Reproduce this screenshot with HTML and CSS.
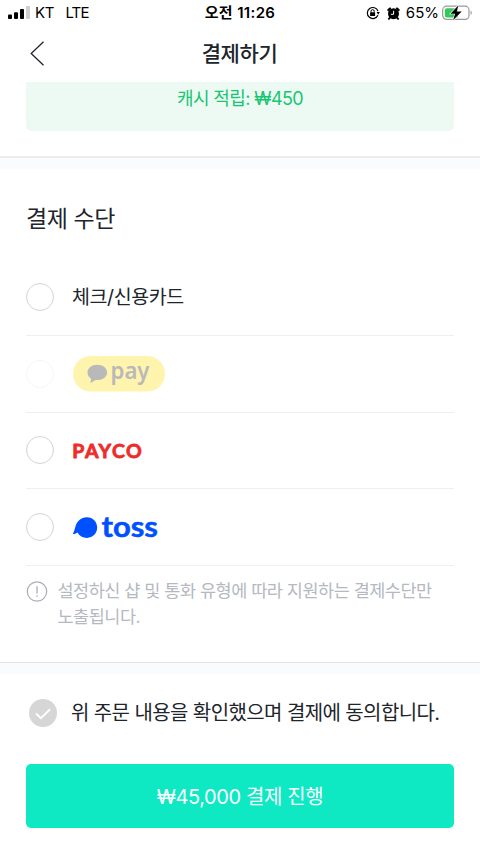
FILE: index.html
```
<!DOCTYPE html>
<html lang="ko">
<head>
<meta charset="utf-8">
<meta name="viewport" content="width=device-width, initial-scale=1">
<title>결제하기</title>
<link rel="stylesheet" href="styles.css">
</head>
<body>
<div class="status">
  <div class="status-left">
    <svg class="signal" width="22" height="14" viewBox="0 0 22 14"><rect x="0" y="8.5" width="4" height="4.5" rx="1"/><rect x="6" y="6.3" width="4" height="6.7" rx="1"/><rect x="12" y="3" width="4" height="10" rx="1"/><rect x="18" y="0" width="4" height="13" rx="1" fill="#cfcfcf"/></svg>
    <span class="carrier">KT</span><span class="network">LTE</span>
  </div>
  <time class="clock">오전 11:26</time>
  <div class="status-right">
    <svg class="lock" width="14" height="14" viewBox="0 0 14 14"><path d="M11.9 9.2A5.5 5.5 0 1 1 12 5.1" fill="none" stroke="#000" stroke-width="1.2"/><path d="M10.6 6h3.2l-1.6 2.7z"/><rect x="4.1" y="6.2" width="5" height="3.9" rx=".6"/><path d="M5 6.4V5.2a1.6 1.6 0 0 1 3.2 0v1.2" fill="none" stroke="#000" stroke-width="1"/></svg>
    <svg class="alarm" width="13" height="13" viewBox="0 0 13 13"><circle cx="6.5" cy="6.700" r="5.500"/><path d="M1.300 3 3 1.400M11.700 3 10 1.400M2.800 10.800l-.9 1M10.200 10.800l.9 1" stroke="#000" stroke-width="2" stroke-linecap="round"/><path d="M6.600 3.800v3.500H3.900" fill="none" stroke="#fff" stroke-width="1"/></svg>
    <span class="percent">65%</span>
    <svg class="battery" width="30" height="18" viewBox="0 0 30 18"><rect x=".7" y="2.200" width="26.300" height="13.200" rx="3.800" fill="#fff" stroke="#999" stroke-width="1.200"/><path d="M5 4.200h11v9.200H5a2.200 2.200 0 0 1-2.200-2.200V6.400a2.200 2.200 0 0 1 2.200-2.200z" fill="#34c759"/><path d="M28.600 6.800v4c1.600-.7 1.600-3.300 0-4z" fill="#999"/><path d="M16.500 1.200 8.500 9.700h4.600l-2 6.600L19.700 7.400h-5z" stroke="#fff" stroke-width="1.200" paint-order="stroke"/></svg>
  </div>
</div>
<header class="header">
  <svg class="back" width="15" height="26" viewBox="0 0 15 26"><path d="M13.500.800 1.200 12.500l12.300 11.700" fill="none" stroke="#20242b" stroke-width="1.300"/></svg>
  <h1 class="title">결제하기</h1>
</header>
<main>
  <section class="reward"><p class="reward-box">캐시 적립: ₩450</p></section>
  <section class="methods">
    <h2 class="heading">결제 수단</h2>
    <ul class="list">
      <li class="row"><i class="radio"></i><span class="label">체크/신용카드</span></li>
      <li class="row disabled"><i class="radio"></i>
        <svg class="kakao" width="94" height="46" viewBox="0 -5 94 46"><rect x="1" width="92" height="35.600" rx="17.800" fill="#fff4ad"/><path d="M25.300 8.800c-5.600 0-9.800 3.300-9.800 7.700 0 2.800 1.400 4.900 3.700 6.200l-.9 4.500 5.200-3.200 1.800.1c5.500 0 9.800-3.200 9.800-7.600s-4.300-7.700-9.800-7.700z" fill="#b9b9b9"/><text class="pay" x="38.500" y="23" textLength="39" lengthAdjust="spacingAndGlyphs">pay</text></svg></li>
      <li class="row"><i class="radio"></i>
        <svg class="payco" width="72" height="32" viewBox="0 0 72 32"><text class="payco-text" x=".3" y="23.500" textLength="69.500" lengthAdjust="spacing">PAYCO</text></svg></li>
      <li class="row"><i class="radio"></i>
        <svg class="toss" width="90" height="44" viewBox="0 0 90 44"><path d="M15 12.200c-6.500 0-10.400 4.600-11.700 9.900-.7 2.500-1.100 4.500-2.400 6.800 1.800.2 3.200-.5 4.600-1.500 1.800 3.400 5.200 5.500 9.500 5.500 5.800 0 10.200-4.500 10.200-10.300S20.800 12.200 15 12.200z" fill="#0050ff"/><text class="toss-text" x="29.500" y="31.800" textLength="56.500" lengthAdjust="spacingAndGlyphs">toss</text></svg></li>
    </ul>
    <div class="notice">
      <svg class="info" width="22" height="22" viewBox="0 0 22 22"><circle cx="11" cy="10.500" r="9.700" fill="none" stroke="#a9acb7" stroke-width="1.200"/><path d="M11 5.300v7.200M11 14.200v1.600" stroke="#a9acb7" stroke-width="1.300"/></svg>
      <p class="notice-text">설정하신 샵 및 통화 유형에 따라 지원하는 결제수단만<br>노출됩니다.</p>
    </div>
  </section>
  <section class="confirm">
    <div class="agree">
      <svg class="check" width="28" height="28" viewBox="0 0 28 28"><circle cx="14" cy="14" r="14" fill="#d6d6d6"/><path d="m7 14.600 4.900 4.600 9.200-8.900" fill="none" stroke="#fff" stroke-width="2"/></svg>
      <span class="agree-text">위 주문 내용을 확인했으며 결제에 동의합니다.</span>
    </div>
    <button class="submit">₩45,000 결제 진행</button>
  </section>
</main>
</body>
</html>
```

FILE: styles.css
```
* { box-sizing: border-box; }
body {
  margin: 0;
  height: 854px;
  overflow: hidden;
  background: #fff;
  color: #20242b;
  font-family: Inter, "Noto Sans CJK KR", sans-serif;
}
h1, h2, p, ul { margin: 0; padding: 0; }
svg { display: block; flex: none; }
.status {
  display: grid;
  grid-template-columns: 1fr auto 1fr;
  align-items: center;
  height: 26px;
  padding: 0 8px;
  color: #000;
  font-size: 15px;
  line-height: 26px;
}
.status-left, .status-right { display: flex; align-items: center; }
.status-right { justify-content: flex-end; }
.signal { margin-top: -1px; }
.carrier { margin-left: 5px; letter-spacing: -0.400px; }
.network { margin-left: 11.500px; letter-spacing: -0.900px; }
.clock { font-weight: 600; letter-spacing: 0.350px; }
.alarm { margin-left: 7px; }
.percent { margin-left: 6px; }
.battery { margin: 0 0 0 3px; }
.header {
  display: grid;
  grid-template-columns: 30px 1fr 30px;
  align-items: center;
  height: 56px;
  padding: 0 30px;
}
.title {
  padding-right: 1px;
  text-align: center;
  font-size: 21px;
  font-weight: 500;
  line-height: 30px;
  letter-spacing: -0.400px;
}
.reward { height: 74px; padding: 0 26px; }
.reward-box {
  height: 48.500px;
  border-radius: 0 0 5px 5px;
  background: #edfaf4;
  color: #17c671;
  text-align: center;
  font-size: 18px;
  line-height: 33px;
  letter-spacing: -0.600px;
}
.methods {
  height: 506px;
  padding: 35px 26px 0;
  border-top: 2px solid #ececee;
  box-shadow: inset 0 11px #fafbfd;
}
.heading {
  margin-top: 10px;
  font-size: 23px;
  font-weight: 400;
  line-height: 32px;
  letter-spacing: -0.400px;
}
.list { margin-top: 24px; list-style: none; }
.row {
  display: flex;
  align-items: center;
  height: 76.800px;
  border-bottom: 1.500px solid #efeff0;
}
.radio {
  width: 28px;
  height: 28px;
  margin-right: 18px;
  border: 1.500px solid #d4d4d6;
  border-radius: 50%;
}
.disabled .radio { border-color: #f6f6f6; }
.label { padding-bottom: 3px; font-size: 19.500px; letter-spacing: -0.400px; }
.pay { font: 600 22.500px "Noto Sans", sans-serif; fill: #b9b9b9; }
.payco-text { font: 700 19.500px Lato, sans-serif; fill: #ee2c2c; stroke: #ee2c2c; stroke-width: .8px; stroke-linejoin: round; }
.toss-text { font: 700 28px Lato, sans-serif; fill: #0050ff; stroke: #0050ff; stroke-width: .5px; }
.notice { display: flex; gap: 9.500px; padding-top: 12px; }
.info { margin-top: 3px; }
.notice-text {
  white-space: nowrap;
  color: #b5b8c1;
  font-size: 17.500px;
  font-weight: 400;
  line-height: 26px;
  letter-spacing: -0.500px;
}
.confirm {
  height: 192px;
  padding: 36px 26px 26px;
  border-top: 1px solid #e4e4e6;
  box-shadow: inset 0 11px #fafbfd;
}
.agree { display: flex; align-items: center; gap: 14px; height: 28px; padding-left: 3px; }
.agree-text { padding-bottom: 3px; white-space: nowrap; font-size: 20px; letter-spacing: -0.600px; }
.submit {
  display: block;
  width: 100%;
  height: 64px;
  margin-top: 37px;
  padding: 0 0 2px;
  border: 0;
  border-radius: 5px;
  background: #0ee9c4;
  color: #fff;
  font: 400 20px Inter, "Noto Sans CJK KR", sans-serif;
  letter-spacing: -0.400px;
}
```
